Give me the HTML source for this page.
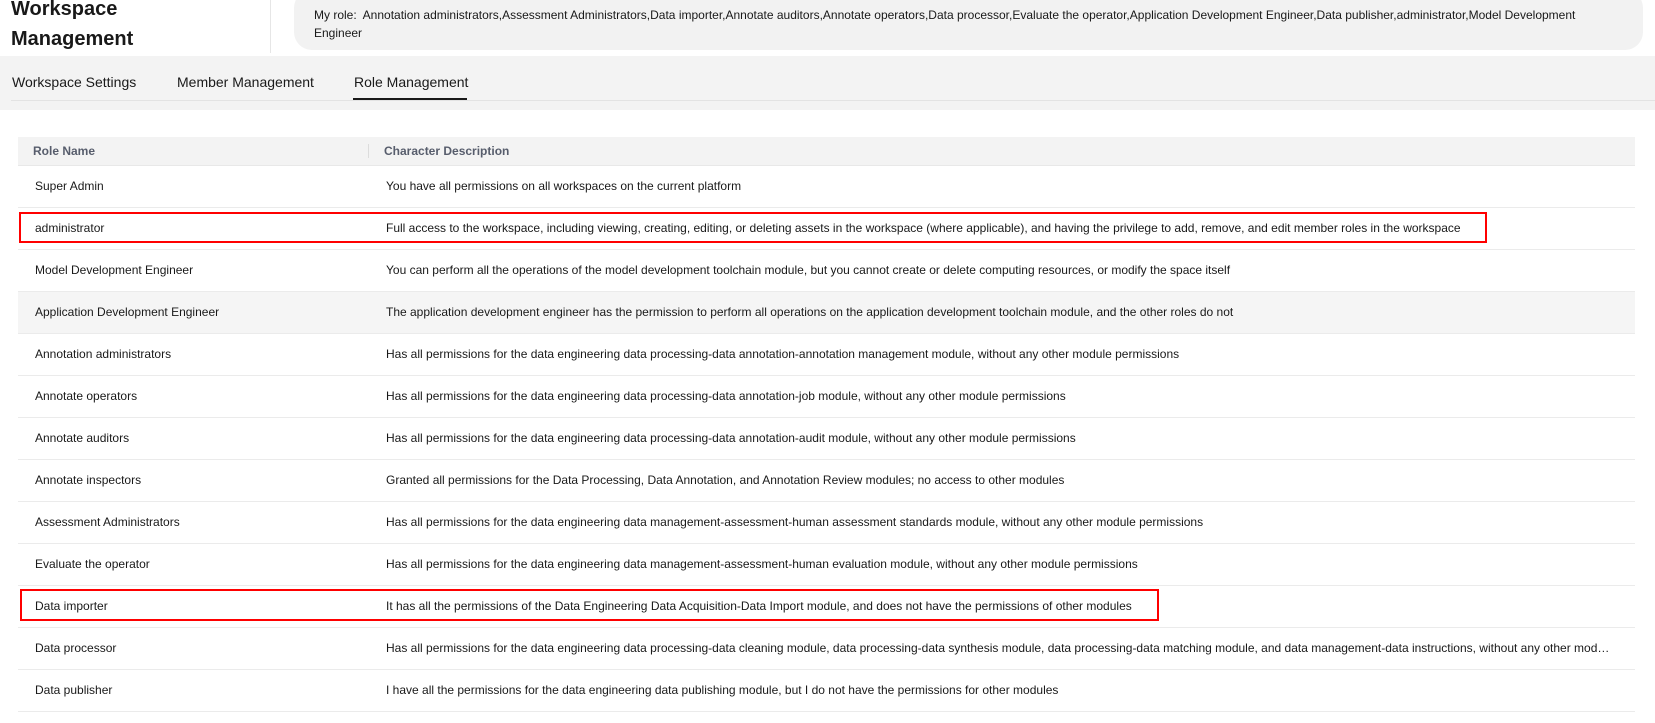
<!DOCTYPE html>
<html><head><meta charset="utf-8"><style>
*{box-sizing:border-box;margin:0;padding:0}
body{width:1655px;height:723px;overflow:hidden;background:#fff;font-family:"Liberation Sans",Arial,sans-serif;color:#191919;position:relative}
.title{position:absolute;left:11px;top:-6px;font-size:20px;font-weight:bold;line-height:30px;color:#191919}
.vdiv{position:absolute;left:270px;top:0;width:1px;height:53px;background:#e6e6e6}
.role{position:absolute;left:294px;top:-10px;width:1349px;height:60px;background:#f2f2f2;border-radius:18px;padding:16px 20px 0 20px;font-size:12px;line-height:18px;color:#191919}
.tabs{position:absolute;left:0;top:56px;width:1655px;height:54px;background:#f3f3f3}
.tabs .line{position:absolute;left:11px;right:0;top:44px;height:1px;background:#e3e3e3}
.tab{position:absolute;top:18px;font-size:14px;color:#191919}
.ul{position:absolute;left:353px;top:42px;width:114px;height:2px;background:#191919}
table{position:absolute;left:18px;top:137px;width:1617px;border-collapse:collapse;table-layout:fixed;font-size:12px}
th{height:28px;background:#f3f3f3;text-align:left;font-weight:bold;color:#575d6c;padding:0 0 0 15px;position:relative;border-bottom:1px solid #e8e8e8}
th.c2::before{content:"";position:absolute;left:-1px;top:7px;width:1px;height:14px;background:#dcdcdc}
td{height:42px;border-bottom:1px solid #ebebeb;padding:0 0 0 17px;white-space:nowrap;overflow:hidden;text-overflow:ellipsis}
td.c2{padding-left:17px;padding-right:20px}
tr.hov td{background:#f5f5f5}
.red{position:absolute;border:2px solid #f00}
</style></head><body>
<div class="title">Workspace<br>Management</div>
<div class="vdiv"></div>
<div class="role">My role:&nbsp; Annotation administrators,Assessment Administrators,Data importer,Annotate auditors,Annotate operators,Data processor,Evaluate the operator,Application Development Engineer,Data publisher,administrator,Model Development Engineer</div>
<div class="tabs"><div class="line"></div>
<div class="tab" style="left:12px">Workspace Settings</div>
<div class="tab" style="left:177px">Member Management</div>
<div class="tab" style="left:354px">Role Management</div>
<div class="ul"></div></div>
<table>
<colgroup><col style="width:351px"><col></colgroup>
<tr><th>Role Name</th><th class="c2">Character Description</th></tr>
<tr><td>Super Admin</td><td class="c2">You have all permissions on all workspaces on the current platform</td></tr>
<tr><td>administrator</td><td class="c2">Full access to the workspace, including viewing, creating, editing, or deleting assets in the workspace (where applicable), and having the privilege to add, remove, and edit member roles in the workspace</td></tr>
<tr><td>Model Development Engineer</td><td class="c2">You can perform all the operations of the model development toolchain module, but you cannot create or delete computing resources, or modify the space itself</td></tr>
<tr class="hov"><td>Application Development Engineer</td><td class="c2">The application development engineer has the permission to perform all operations on the application development toolchain module, and the other roles do not</td></tr>
<tr><td>Annotation administrators</td><td class="c2">Has all permissions for the data engineering data processing-data annotation-annotation management module, without any other module permissions</td></tr>
<tr><td>Annotate operators</td><td class="c2">Has all permissions for the data engineering data processing-data annotation-job module, without any other module permissions</td></tr>
<tr><td>Annotate auditors</td><td class="c2">Has all permissions for the data engineering data processing-data annotation-audit module, without any other module permissions</td></tr>
<tr><td>Annotate inspectors</td><td class="c2">Granted all permissions for the Data Processing, Data Annotation, and Annotation Review modules; no access to other modules</td></tr>
<tr><td>Assessment Administrators</td><td class="c2">Has all permissions for the data engineering data management-assessment-human assessment standards module, without any other module permissions</td></tr>
<tr><td>Evaluate the operator</td><td class="c2">Has all permissions for the data engineering data management-assessment-human evaluation module, without any other module permissions</td></tr>
<tr><td>Data importer</td><td class="c2">It has all the permissions of the Data Engineering Data Acquisition-Data Import module, and does not have the permissions of other modules</td></tr>
<tr><td>Data processor</td><td class="c2">Has all permissions for the data engineering data processing-data cleaning module, data processing-data synthesis module, data processing-data matching module, and data management-data instructions, without any other module permissions</td></tr>
<tr><td>Data publisher</td><td class="c2">I have all the permissions for the data engineering data publishing module, but I do not have the permissions for other modules</td></tr>
</table>
<div class="red" style="left:19px;top:212px;width:1468px;height:31px"></div>
<div class="red" style="left:20px;top:589px;width:1139px;height:32px"></div>
</body></html>
